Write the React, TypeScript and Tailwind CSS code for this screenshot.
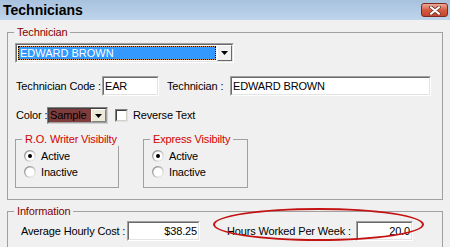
import React from "react";

function Arrow() {
  return (
    <svg width="7" height="4" viewBox="0 0 7 4">
      <path d="M0 0H7L3.5 4Z" fill="#000" />
    </svg>
  );
}

function Radio({ checked, id }: { checked: boolean; id: string }) {
  return (
    <svg width="12" height="12" viewBox="0 0 12 12" className="shrink-0">
      <defs>
        <linearGradient id={id} x1="0" y1="0" x2="1" y2="1">
          <stop offset="0" stopColor="#7a7a7a" />
          <stop offset="0.55" stopColor="#c8c8c8" />
          <stop offset="1" stopColor="#ffffff" />
        </linearGradient>
      </defs>
      <circle cx="6" cy="6" r="6" fill={`url(#${id})`} />
      <circle cx="6" cy="6" r="4.6" fill="#fff" />
      {checked && <circle cx="6" cy="6" r="2" fill="#000" />}
    </svg>
  );
}

function Input({
  className,
  children,
  right,
}: {
  className: string;
  children: React.ReactNode;
  right?: boolean;
}) {
  return (
    <div
      className={`${className} h-[20px] border border-t-[#a0a0a0] border-l-[#a0a0a0] border-r-white border-b-white`}
    >
      <div
        className={`h-full border border-t-[#696969] border-l-[#696969] border-r-[#e3e3e3] border-b-[#e3e3e3] bg-white flex items-center text-black whitespace-nowrap ${
          right ? "justify-end pr-[1px]" : "pl-[1px]"
        }`}
      >
        {children}
      </div>
    </div>
  );
}

function Group({
  className,
  title,
  red,
  children,
}: {
  className: string;
  title: string;
  red?: boolean;
  children: React.ReactNode;
}) {
  return (
    <div className={`${className} relative pt-[7px]`}>
      <div className="h-full border border-solid border-[#a0a0a0] pt-[6px]">{children}</div>
      <span
        className={`absolute left-[7px] top-0 px-[3px] leading-[14px] whitespace-nowrap bg-[#f0f0f0] ${
          red ? "text-[#d40000]" : "text-[#800000]"
        }`}
      >
        {title}
      </span>
    </div>
  );
}

function Visibility({ title, idp, className }: { title: string; idp: string; className: string }) {
  return (
    <Group className={className} title={title} red>
      <div className="pt-[2px] pl-[8px]">
        <div className="h-[16px] flex items-center gap-[5px]">
          <Radio checked id={`${idp}a`} />
          <span>Active</span>
        </div>
        <div className="h-[16px] flex items-center gap-[5px]">
          <Radio checked={false} id={`${idp}b`} />
          <span>Inactive</span>
        </div>
      </div>
    </Group>
  );
}

export default function App() {
  return (
    <div className="relative w-[450px] h-[247px] overflow-hidden bg-[#f0f0f0] font-['Liberation_Sans',Arial,sans-serif] text-[11px] tracking-[-0.15px] text-black">
      {/* Title bar */}
      <div className="h-[20px] flex items-center justify-between pl-[3px] pr-[2px] bg-linear-to-b from-[#a8c1dd] to-[#bfd5ec]">
        <span className="text-[14px] font-bold leading-[20px] tracking-normal">Technicians</span>
        <div className="w-[27px] h-[14px] rounded-[3px] border border-[#7e2a20] bg-linear-to-b from-[#e9aa9a] via-[#d65a40] to-[#c4452e] flex items-center justify-center">
          <svg width="12" height="9" viewBox="0 0 12 9">
            <path d="M2 1.2L10 7.8M10 1.2L2 7.8" stroke="#6d3a33" strokeWidth="3.6" strokeLinecap="round" />
            <path d="M2 1.2L10 7.8M10 1.2L2 7.8" stroke="#ffffff" strokeWidth="2" strokeLinecap="round" />
          </svg>
        </div>
      </div>

      {/* Technician group */}
      <Group className="mt-[5px] ml-[7px] w-[436px] h-[175px]" title="Technician">
        <div className="pl-[7px]">
          {/* Combo */}
          <div className="mt-[4px] w-[219px] h-[20px] flex border border-t-[#a0a0a0] border-l-[#a0a0a0] border-r-white border-b-white">
            <div className="flex-1 flex border border-t-[#696969] border-l-[#696969] border-r-[#e3e3e3] border-b-[#e3e3e3] bg-white">
              <div className="flex-1 m-[1px] bg-[#e09a3a] border border-dotted border-black">
                <div className="h-full bg-[#3399ff] text-white flex items-center pl-[1px] tracking-normal">
                  EDWARD BROWN
                </div>
              </div>
              <div className="w-[15px] h-full bg-[#f0f0f0] border border-t-white border-l-white border-r-[#696969] border-b-[#696969] flex items-center justify-center">
                <Arrow />
              </div>
            </div>
          </div>

          {/* Row 2 */}
          <div className="mt-[13px] h-[20px] flex items-center">
            <span className="w-[87px] pl-[1px] whitespace-nowrap">Technician Code :</span>
            <Input className="w-[57px]">EAR</Input>
            <span className="ml-[8px] w-[63px] whitespace-nowrap">Technician :</span>
            <Input className="w-[201px]">EDWARD BROWN</Input>
          </div>

          {/* Row 3 */}
          <div className="mt-[11px] h-[17px] flex items-center">
            <span className="w-[32px] pl-[1px] whitespace-nowrap">Color :</span>
            <div className="w-[61px] h-[17px] flex border border-t-[#808080] border-l-[#808080] border-r-[#d0d0d0] border-b-[#d0d0d0]">
              <div className="flex-1 flex border border-t-[#404040] border-l-[#404040] border-r-[#a0a0a0] border-b-[#a0a0a0]">
                <div className="flex-1 bg-[#7f3c3c] flex items-center pl-[1px] text-black">Sample</div>
                <div className="w-[15px] h-full bg-[#ece9d8] border border-t-white border-l-white border-r-[#808080] border-b-[#808080] flex items-center justify-center">
                  <Arrow />
                </div>
              </div>
            </div>
            <div className="ml-[7px] w-[13px] h-[13px] border border-t-[#808080] border-l-[#808080] border-r-[#e3e3e3] border-b-[#e3e3e3] bg-white">
              <div className="w-full h-full border border-t-[#404040] border-l-[#404040] border-r-[#d4d0c8] border-b-[#d4d0c8] bg-white" />
            </div>
            <span className="ml-[5px] whitespace-nowrap">Reverse Text</span>
          </div>

          {/* Visibility groups */}
          <div className="mt-[8px] flex">
            <Visibility className="w-[104px] h-[56px]" title="R.O. Writer Visibilty" idp="ro" />
            <Visibility className="ml-[24px] w-[105px] h-[56px]" title="Express Visibilty" idp="ex" />
          </div>
        </div>
      </Group>

      {/* Information group */}
      <Group className="mt-[4px] ml-[7px] w-[436px] h-[60px]" title="Information">
        <div className="mt-[3px] pl-[13px] h-[20px] flex items-center">
          <span className="w-[106px] whitespace-nowrap">Average Hourly Cost :</span>
          <Input className="w-[73px]" right>
            $38.25
          </Input>
          <span className="ml-[27px] w-[129px] whitespace-nowrap">Hours Worked Per Week :</span>
          <Input className="w-[57px]" right>
            20.0
          </Input>
        </div>
      </Group>

      {/* Annotation ellipse */}
      <div className="absolute left-[213px] top-[208px] w-[211px] h-[33px] rounded-[50%] border-2 border-[#c41212] pointer-events-none" />
    </div>
  );
}
